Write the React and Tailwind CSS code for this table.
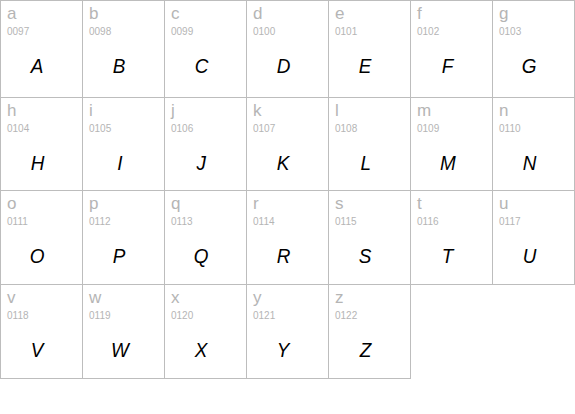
const letters = "abcdefghijklmnopqrstuvwxyz".split("");
const heights = ["h-[97px]", "h-[93px]", "h-[94px]", "h-[94px]"];

export default function App() {
  return (
    <div className="w-[575px] h-[414px] bg-white" style={{ fontFamily: '"Liberation Sans", Arial, sans-serif' }}>
      <div className="grid grid-cols-[repeat(7,82px)] border-l border-t border-[#bdbdbd] w-[575px]">
        {letters.map((l, i) => (
          <div key={l} className={`${heights[Math.floor(i / 7)]} border-r border-b border-[#bdbdbd] flex flex-col`}>
            <div className="pl-[6px] pt-[3px] text-[17px] leading-[19px] text-[#b5b5b5]">{l}</div>
            <div className="pl-[6px] mt-[3px] text-[10px] leading-[12px] text-[#b5b5b5]">
              {String(l.charCodeAt(0)).padStart(4, "0")}
            </div>
            <div className="mt-[15px] pr-[8px] text-center text-[21px] leading-[26px] italic text-black">
              <span className="inline-block scale-x-90">{l.toUpperCase()}</span>
            </div>
          </div>
        ))}
      </div>
    </div>
  );
}
